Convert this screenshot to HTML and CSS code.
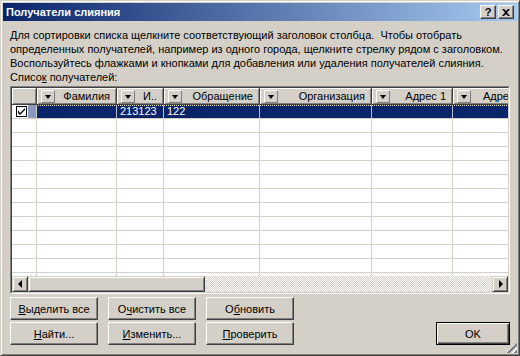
FILE: index.html
```html
<!DOCTYPE html>
<html lang="ru">
<head>
    <meta charset="UTF-8">
    <title>Получатели слияния</title>
    <link rel="stylesheet" href="styles.css">
</head>
<body>
    <div class="window">
        <div class="titlebar">
            <span class="title">Получатели слияния</span>
            <div class="caption-buttons">
                <div class="cap-btn help">?</div>
                <div class="cap-btn close">
                    <svg width="8" height="7" viewBox="0 0 8 7"><path d="M0 0h2l2 2 2-2h2L5 3.5 8 7H6L4 5 2 7H0l3-3.5z" fill="#000"/></svg>
                </div>
            </div>
        </div>

        <div class="content">
            <p class="intro">Для сортировки списка щелкните соответствующий заголовок столбца.&nbsp; Чтобы отобрать<br>определенных получателей, например из одного города, щелкните стрелку рядом с заголовком.<br>Воспользуйтесь флажками и кнопками для добавления или удаления получателей слияния.</p>
            <div class="list-label">Списо<u>к</u> получателей:</div>

            <!-- список получателей -->
            <div class="grid">
                <div class="grid-inner">
                    <div class="row head">
                        <div class="hcell c0"></div>
                        <div class="hcell c1"><span class="drop"></span>Фамилия</div>
                        <div class="hcell c2"><span class="drop"></span>И..</div>
                        <div class="hcell c3"><span class="drop"></span>Обращение</div>
                        <div class="hcell c4"><span class="drop"></span>Организация</div>
                        <div class="hcell c5"><span class="drop"></span>Адрес 1</div>
                        <div class="hcell c6"><span class="drop"></span>Адрес 2</div>
                    </div>
                    <div class="rows">
                        <div class="row selected">
                            <div class="cell c0"><span class="check">
                                <svg width="7" height="7" viewBox="0 0 7 7"><path d="M0 2v3l2 2 5-5V0L2 5z" fill="#000"/></svg>
                            </span><span class="mark"></span></div>
                            <div class="cell c1"></div>
                            <div class="cell c2">213123</div>
                            <div class="cell c3">122</div>
                            <div class="cell c4"></div>
                            <div class="cell c5"></div>
                            <div class="cell c6"></div>
                        </div>
                        <div class="row"><div class="cell c0"></div><div class="cell c1"></div><div class="cell c2"></div><div class="cell c3"></div><div class="cell c4"></div><div class="cell c5"></div><div class="cell c6"></div></div>
                        <div class="row"><div class="cell c0"></div><div class="cell c1"></div><div class="cell c2"></div><div class="cell c3"></div><div class="cell c4"></div><div class="cell c5"></div><div class="cell c6"></div></div>
                        <div class="row"><div class="cell c0"></div><div class="cell c1"></div><div class="cell c2"></div><div class="cell c3"></div><div class="cell c4"></div><div class="cell c5"></div><div class="cell c6"></div></div>
                        <div class="row"><div class="cell c0"></div><div class="cell c1"></div><div class="cell c2"></div><div class="cell c3"></div><div class="cell c4"></div><div class="cell c5"></div><div class="cell c6"></div></div>
                        <div class="row"><div class="cell c0"></div><div class="cell c1"></div><div class="cell c2"></div><div class="cell c3"></div><div class="cell c4"></div><div class="cell c5"></div><div class="cell c6"></div></div>
                        <div class="row"><div class="cell c0"></div><div class="cell c1"></div><div class="cell c2"></div><div class="cell c3"></div><div class="cell c4"></div><div class="cell c5"></div><div class="cell c6"></div></div>
                        <div class="row"><div class="cell c0"></div><div class="cell c1"></div><div class="cell c2"></div><div class="cell c3"></div><div class="cell c4"></div><div class="cell c5"></div><div class="cell c6"></div></div>
                        <div class="row"><div class="cell c0"></div><div class="cell c1"></div><div class="cell c2"></div><div class="cell c3"></div><div class="cell c4"></div><div class="cell c5"></div><div class="cell c6"></div></div>
                        <div class="row"><div class="cell c0"></div><div class="cell c1"></div><div class="cell c2"></div><div class="cell c3"></div><div class="cell c4"></div><div class="cell c5"></div><div class="cell c6"></div></div>
                        <div class="row"><div class="cell c0"></div><div class="cell c1"></div><div class="cell c2"></div><div class="cell c3"></div><div class="cell c4"></div><div class="cell c5"></div><div class="cell c6"></div></div>
                        <div class="row"><div class="cell c0"></div><div class="cell c1"></div><div class="cell c2"></div><div class="cell c3"></div><div class="cell c4"></div><div class="cell c5"></div><div class="cell c6"></div></div>
                        <div class="row"><div class="cell c0"></div><div class="cell c1"></div><div class="cell c2"></div><div class="cell c3"></div><div class="cell c4"></div><div class="cell c5"></div><div class="cell c6"></div></div>
                    </div>
                    <div class="hscroll">
                        <div class="sb-btn"><span class="arrow-left"></span></div>
                        <div class="sb-thumb"></div>
                        <div class="sb-track"></div>
                        <div class="sb-btn"><span class="arrow-right"></span></div>
                    </div>
                </div>
            </div>

            <div class="buttons">
                <div class="btn"><u>В</u>ыделить все</div>
                <div class="btn">О<u>ч</u>истить все</div>
                <div class="btn">О<u>б</u>новить</div>
                <div class="spacer"></div>
                <div class="btn"><u>Н</u>айти...</div>
                <div class="btn"><u>И</u>зменить...</div>
                <div class="btn"><u>П</u>роверить</div>
                <div class="btn default">OK</div>
            </div>
        </div>
        <div class="grip"></div>
    </div>
</body>
</html>
```

FILE: styles.css
```css
html, body {
    margin: 0;
    padding: 0;
}
body {
    font-family: "Liberation Sans", Arial, sans-serif;
    font-size: 11px;
    color: #000;
    background: #d4d0c8;
}
.window {
    position: relative;
    width: 520px;
    height: 356px;
    box-sizing: border-box;
    background: #d4d0c8;
    border: 1px solid;
    border-color: #d4d0c8 #404040 #404040 #d4d0c8;
    box-shadow: inset 1px 1px #fff, inset -1px -1px #808080;
    padding: 2px;
    display: flex;
    flex-direction: column;
}

/* заголовок окна */
.titlebar {
    height: 18px;
    background: linear-gradient(to right, #0a246a, #a6caf0);
    display: flex;
    align-items: center;
    justify-content: space-between;
    padding: 0 3px 0 3px;
}
.title {
    color: #fff;
    font-weight: bold;
    font-size: 11px;
}
.caption-buttons {
    display: flex;
    gap: 2px;
}
.cap-btn {
    width: 16px;
    height: 14px;
    box-sizing: border-box;
    background: #d4d0c8;
    border: 1px solid;
    border-color: #fff #404040 #404040 #fff;
    box-shadow: inset -1px -1px #808080;
    display: flex;
    align-items: center;
    justify-content: center;
    font-weight: bold;
    font-size: 11px;
    line-height: 1;
}

.content {
    padding: 0 7px;
    display: flex;
    flex-direction: column;
}
.intro {
    margin: 7px 0 0;
    line-height: 14px;
    white-space: nowrap;
}
.list-label {
    line-height: 14px;
    margin-top: 0;
    height: 16px;
}

/* таблица */
.grid {
    width: 500px;
    height: 208px;
    box-sizing: border-box;
    border: 1px solid;
    border-color: #808080 #fff #fff #808080;
    background: #fff;
}
.grid-inner {
    height: 100%;
    box-sizing: border-box;
    border: 1px solid;
    border-color: #404040 #d4d0c8 #d4d0c8 #404040;
    display: flex;
    flex-direction: column;
    overflow: hidden;
}
.row {
    display: flex;
    height: 14px;
    box-sizing: border-box;
    border-bottom: 1px solid #d4d0c8;
    flex-shrink: 0;
}
.row.head {
    height: 17px;
    border-bottom: none;
}
.c0 { width: 25px; }
.c1 { width: 80px; }
.c2 { width: 47px; }
.c3 { width: 96px; }
.c4 { width: 112px; }
.c5 { width: 81px; }
.c6 { width: 100px; }
.hcell, .cell {
    flex-shrink: 0;
    box-sizing: border-box;
    white-space: nowrap;
    overflow: hidden;
}
.hcell {
    position: relative;
    background: #d4d0c8;
    border-right: 1px solid #404040;
    border-bottom: 1px solid #404040;
    box-shadow: inset 1px 1px #fff, inset -1px -1px #808080;
    text-align: right;
    padding-right: 6px;
    line-height: 16px;
}
.drop {
    position: absolute;
    left: 4px;
    top: 2px;
    width: 14px;
    height: 13px;
    box-sizing: border-box;
    background: #d4d0c8;
    border: 1px solid;
    border-color: #fff #808080 #808080 #fff;
}
.drop::after {
    content: "";
    position: absolute;
    left: 3px;
    top: 4px;
    border-left: 3.5px solid transparent;
    border-right: 3.5px solid transparent;
    border-top: 4px solid #000;
}
.hcell.c6 {
    text-align: left;
    padding-left: 30px;
}
.rows {
    flex: 1;
    overflow: hidden;
}
.cell {
    border-right: 1px solid #d4d0c8;
    line-height: 13px;
    padding-left: 3px;
}
.row.selected {
    background: #0a246a;
    color: #fff;
    border-bottom-color: #d4d0c8;
    background-image: repeating-linear-gradient(to right, #e8e8c0 0 1px, transparent 1px 2px);
    background-size: 100% 1px;
    background-repeat: no-repeat;
}
.row.selected .cell {
    border-right-color: #b8c0d8;
}
.row.selected .c0 {
    background: #fff;
    padding: 0;
    display: flex;
    align-items: center;
    border-right-color: #d4d0c8;
}
.check {
    margin-left: 4px;
    width: 11px;
    height: 11px;
    box-sizing: border-box;
    border: 1px solid #000;
    background: #fff;
    display: flex;
    align-items: center;
    justify-content: center;
}
.mark {
    margin-left: 1px;
    flex: 1;
    align-self: stretch;
    background: #8a98c0;
}

/* полоса прокрутки */
.hscroll {
    display: flex;
    height: 16px;
    flex-shrink: 0;
}
.sb-btn, .sb-thumb {
    box-sizing: border-box;
    background: #d4d0c8;
    border: 1px solid;
    border-color: #d4d0c8 #404040 #404040 #d4d0c8;
    box-shadow: inset 1px 1px #fff, inset -1px -1px #808080;
}
.sb-btn {
    width: 16px;
    position: relative;
}
.sb-thumb {
    width: 177px;
}
.sb-track {
    flex: 1;
    background: repeating-conic-gradient(#fff 0 25%, #d4d0c8 0 50%) 0 0 / 2px 2px;
}
.arrow-left, .arrow-right {
    position: absolute;
    top: 3px;
    border-top: 4px solid transparent;
    border-bottom: 4px solid transparent;
}
.arrow-left {
    left: 5px;
    border-right: 4px solid #000;
}
.arrow-right {
    left: 6px;
    border-left: 4px solid #000;
}

/* кнопки */
.buttons {
    margin-top: 3px;
    display: grid;
    grid-template-columns: 88px 88px 88px 1fr 74px;
    grid-template-rows: 23px 23px;
    column-gap: 10px;
    row-gap: 2px;
}
.buttons .spacer {
    grid-column: 4 / 6;
}
.btn {
    box-sizing: border-box;
    background: #d4d0c8;
    border: 1px solid;
    border-color: #fff #404040 #404040 #fff;
    box-shadow: inset -1px -1px #808080;
    display: flex;
    align-items: center;
    justify-content: center;
    white-space: nowrap;
}
.btn.default {
    grid-column: 5;
    border-color: #000;
    box-shadow: inset 1px 1px #fff, inset -1px -1px #404040, inset -2px -2px #808080;
}

.grip {
    position: absolute;
    right: 2px;
    bottom: 2px;
    width: 11px;
    height: 11px;
    background: repeating-linear-gradient(135deg, transparent 0 2px, #fff 2px 3px, #808080 3px 5px);
    clip-path: polygon(100% 0, 100% 100%, 0 100%);
}
```
